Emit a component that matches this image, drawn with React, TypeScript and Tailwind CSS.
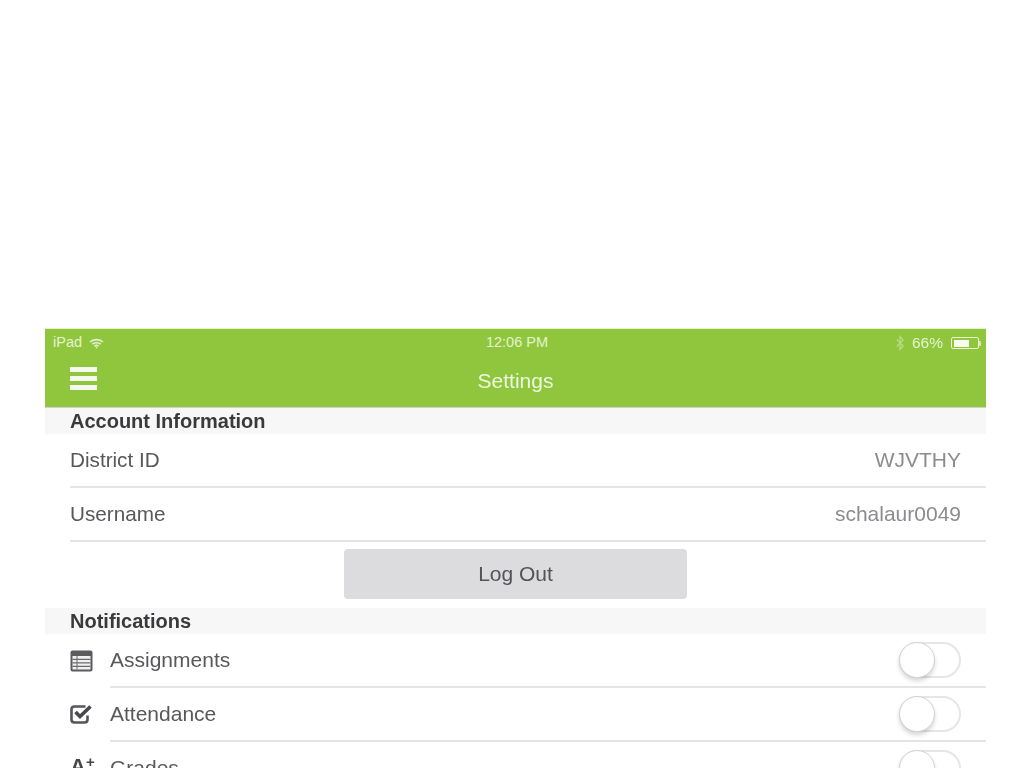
const font = "font-['Liberation_Sans',Arial,sans-serif]";

const Wifi = () => (
  <svg width="15" height="11" viewBox="0 0 15 11" fill="none" stroke="#e6f3cf" strokeWidth="1.6">
    <path d="M1 4 C4.5 0.8 10.5 0.8 14 4" />
    <path d="M3.2 6.2 C5.5 4.2 9.5 4.2 11.8 6.2" />
    <path d="M5.4 8.2 C6.6 7.2 8.4 7.2 9.6 8.2" />
    <circle cx="7.5" cy="9.8" r="0.8" fill="#e6f3cf" stroke="none" />
  </svg>
);

const Bluetooth = () => (
  <svg width="8" height="16" viewBox="0 0 8 16" fill="none" stroke="#b9dc82" strokeWidth="1.2">
    <path d="M0.8 4.5 L7.2 11 L4 14.5 V1.5 L7.2 5 L0.8 11.5" />
  </svg>
);

const Battery = () => (
  <div className="flex items-center">
    <div className="w-[28px] h-[12px] border border-[#e9f4d6] rounded-[2px] p-[1.5px]">
      <div className="h-full w-[66%] bg-[#f8fbf0]" />
    </div>
    <div className="w-[2px] h-[5px] bg-[#d5e9b0] rounded-r-[1px]" />
  </div>
);

const ListIcon = () => (
  <svg width="23" height="22" viewBox="0 0 23 22">
    <rect x="0.5" y="0.5" width="22" height="21" rx="2" fill="#5a5a5f" />
    <rect x="2.5" y="6" width="18" height="13.5" fill="#f0f0f0" />
    <path d="M2.5 9.3 H20.5 M2.5 12.8 H20.5 M2.5 16.3 H20.5" stroke="#6a6a6e" strokeWidth="1.2" />
    <path d="M7 6 V19.5" stroke="#6a6a6e" strokeWidth="1" />
  </svg>
);

const CheckIcon = () => (
  <svg className="-mt-[2px]" width="23" height="20" viewBox="0 0 23 20" fill="none">
    <path d="M15.5 2.5 H4.5 Q1.5 2.5 1.5 5.5 V15.5 Q1.5 18.5 4.5 18.5 H14.5 Q17.5 18.5 17.5 15.5 V11.5" stroke="#55555a" strokeWidth="2.6" />
    <path d="M5.5 8 L10 12.5 L20.5 2.5" stroke="#48484c" strokeWidth="3.6" />
  </svg>
);

const Toggle = () => (
  <div className="relative w-[62px] h-[36px] rounded-full border-2 border-[#e6e6e6] bg-white">
    <div className="absolute top-[-2px] left-[-2px] w-[36px] h-[36px] rounded-full bg-white border border-[#d2d2d2] shadow-[0_3px_4px_rgba(0,0,0,0.16)]" />
  </div>
);

const SectionHeader = ({ title }: { title: string }) => (
  <div className="h-[26px] pl-[25px] flex items-center bg-[#f7f7f7] text-[20px] font-bold text-[#3a3a3c]">
    {title}
  </div>
);

const InfoRow = ({ label, value }: { label: string; value: string }) => (
  <div className="ml-[25px] h-[54px] pr-[25px] flex items-center justify-between border-b-2 border-[#e4e4e6]">
    <span className="text-[20.7px] text-[#58585c]">{label}</span>
    <span className="text-[21px] text-[#8c8c90]">{value}</span>
  </div>
);

const ToggleRow = ({ icon, label }: { icon: React.ReactNode; label: string }) => (
  <div className="flex h-[54px] pl-[25px]">
    <div className="w-[40px] flex items-center">{icon}</div>
    <div className="flex-1 flex items-center justify-between pr-[25px] border-b-2 border-[#e4e4e6]">
      <span className="text-[21px] text-[#58585c]">{label}</span>
      <Toggle />
    </div>
  </div>
);

export default function App() {
  return (
    <div className={`h-[768px] overflow-hidden bg-white ${font}`}>
      <div className="h-[328px]" />
      <div className="ml-[45px] w-[941px] blur-[0.4px]">
        <header className="h-[80px] bg-[#8fc63e] border-t border-t-[#e4f2c8] border-b border-b-[#d0d0d0]">
          <div className="h-[27px] pt-[1px] pl-[8px] pr-[5px] grid grid-cols-3 items-center text-[#e6f3cf]">
            <div className="flex items-center gap-[7px] text-[14.5px]">
              iPad
              <Wifi />
            </div>
            <div className="text-center text-[14.5px]">12:06 PM</div>
            <div className="flex items-center justify-end gap-[8px]">
              <Bluetooth />
              <span className="text-[15.5px] font-medium">66%</span>
              <Battery />
            </div>
          </div>
          <div className="h-[51px] grid grid-cols-3 items-center">
            <div className="flex flex-col gap-[4px] w-[27px] ml-[25px] pb-[6px]">
              <div className="h-[5px] bg-[#f6faee]" />
              <div className="h-[5px] bg-[#f6faee]" />
              <div className="h-[5px] bg-[#f6faee]" />
            </div>
            <div className="text-center text-[21px] text-[#eef7df] pb-[2px]">Settings</div>
          </div>
        </header>

        <SectionHeader title="Account Information" />
        <InfoRow label="District ID" value="WJVTHY" />
        <InfoRow label="Username" value="schalaur0049" />

        <div className="h-[66px] pt-[7px] flex justify-center">
          <button className="w-[343px] h-[50px] bg-[#dcdcde] rounded-[4px] text-[21px] text-[#535358]">
            Log Out
          </button>
        </div>

        <SectionHeader title="Notifications" />
        <ToggleRow icon={<ListIcon />} label="Assignments" />
        <ToggleRow icon={<CheckIcon />} label="Attendance" />
        <ToggleRow
          icon={
            <span className="text-[22px] font-bold text-[#47474b] leading-none -mt-[4px]">
              A<sup className="text-[15px]">+</sup>
            </span>
          }
          label="Grades"
        />
      </div>
    </div>
  );
}
